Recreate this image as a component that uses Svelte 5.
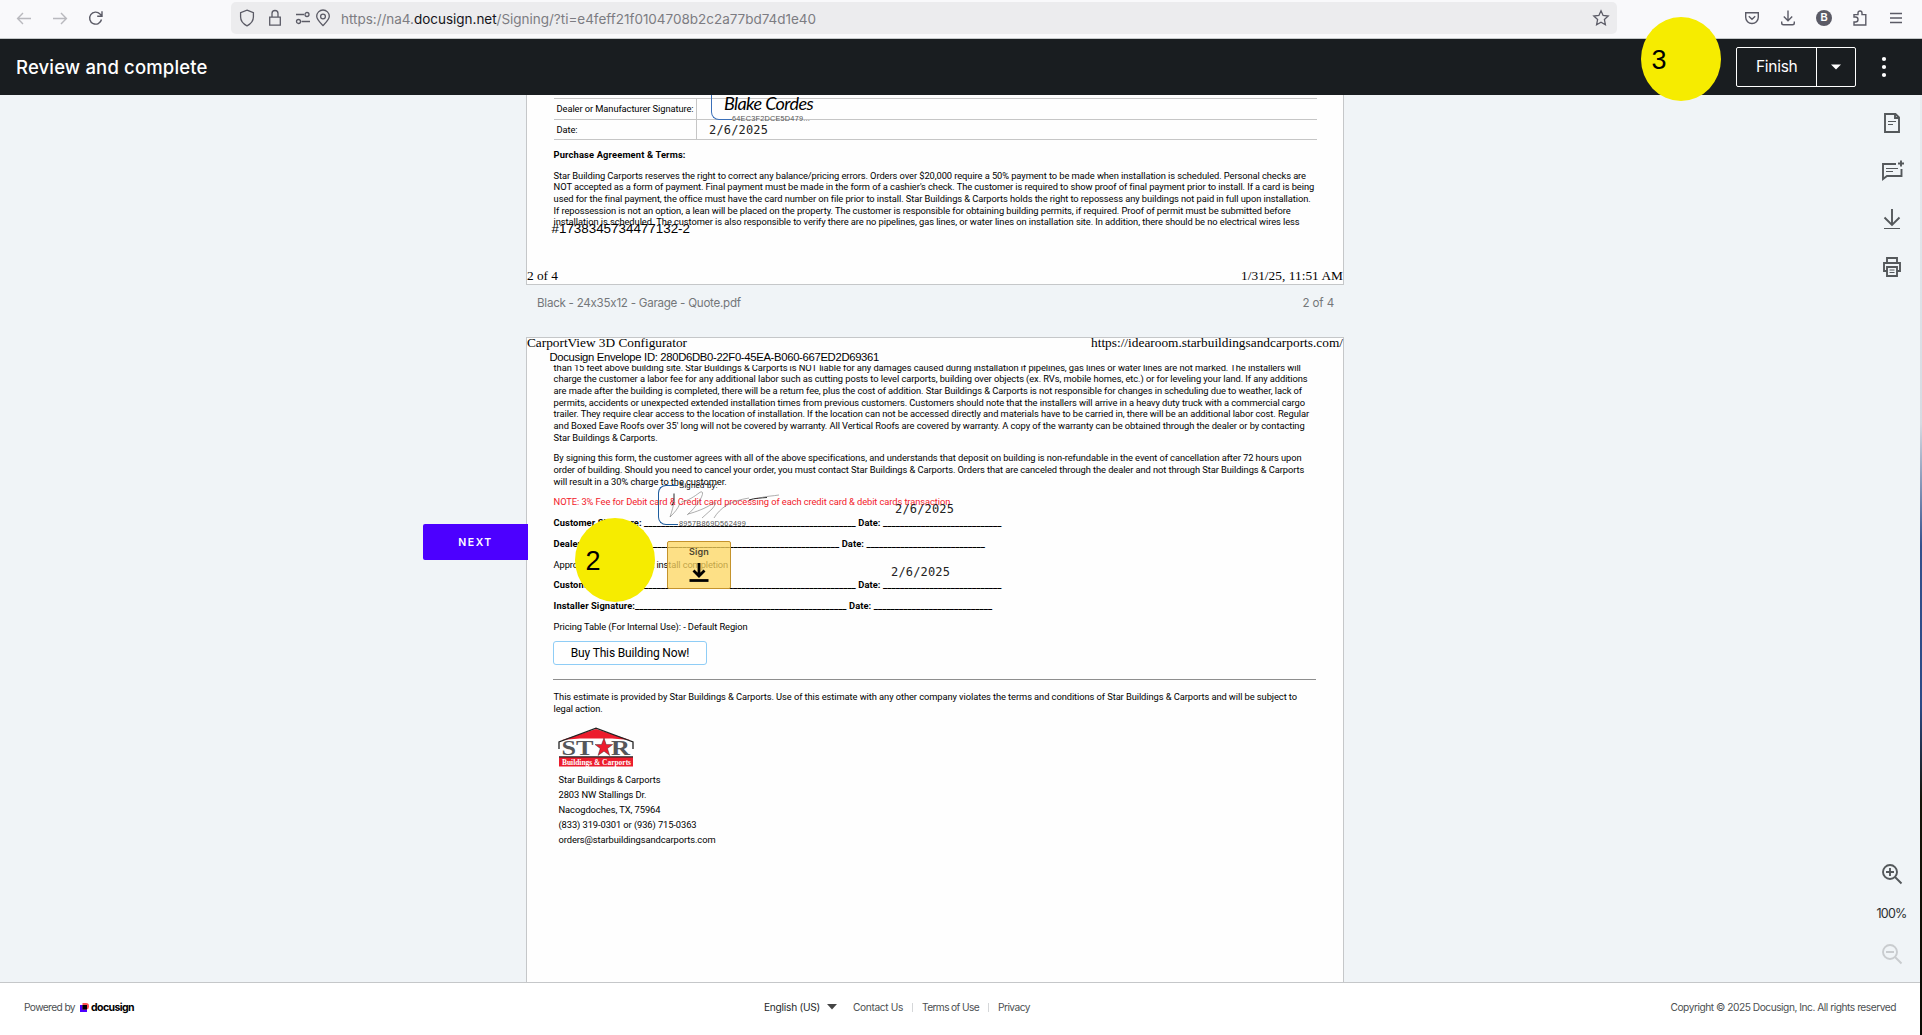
<script>
  function fit(node, width) {
    const natural = node.getBoundingClientRect().width;
    const count = [...node.textContent].length;
    node.style.letterSpacing = `${(width - natural) / count}px`;
  }

  const terms = [
    ['Star Building Carports reserves the right to correct any balance/pricing errors. Orders over $20,000 require a 50% payment to be made when installation is scheduled. Personal checks are', 752.4],
    ["NOT accepted as a form of payment. Final payment must be made in the form of a cashier's check. The customer is required to show proof of final payment prior to install. If a card is being", 760.2],
    ['used for the final payment, the office must have the card number on file prior to install. Star Buildings & Carports holds the right to repossess any buildings not paid in full upon installation.', 755.6],
    ['If repossession is not an option, a lean will be placed on the property. The customer is responsible for obtaining building permits, if required. Proof of permit must be submitted before', 737],
    ['installation is scheduled. The customer is also responsible to verify there are no pipelines, gas lines, or water lines on installation site. In addition, there should be no electrical wires less', 746]
  ];

  const liability = [
    ['than 15 feet above building site. Star Buildings & Carports is NOT liable for any damages caused during installation if pipelines, gas lines or water lines are not marked. The installers will', 747.2],
    ['charge the customer a labor fee for any additional labor such as cutting posts to level carports, building over objects (ex. RVs, mobile homes, etc.) or for leveling your land. If any additions', 754],
    ['are made after the building is completed, there will be a return fee, plus the cost of addition. Star Buildings & Carports is not responsible for changes in scheduling due to weather, lack of', 748.4],
    ['permits, accidents or unexpected extended installation times from previous customers. Customers should note that the installers will arrive in a heavy duty truck with a commercial cargo', 751.4],
    ['trailer. They require clear access to the location of installation. If the location can not be accessed directly and materials have to be carried in, there will be an additional labor cost. Regular', 755.4],
    ["and Boxed Eave Roofs over 35' long will not be covered by warranty. All Vertical Roofs are covered by warranty. A copy of the warranty can be obtained through the dealer or by contacting", 751],
    ['Star Buildings & Carports.', 104]
  ];

  const agreement = [
    ['By signing this form, the customer agrees with all of the above specifications, and understands that deposit on building is non-refundable in the event of cancellation after 72 hours upon', 747.6],
    ['order of building. Should you need to cancel your order, you must contact Star Buildings & Carports. Orders that are canceled through the dealer and not through Star Buildings & Carports', 750.6],
    ['will result in a 30% charge to the customer.', 173]
  ];

  const line = '_'.repeat(50);
  const short = '_'.repeat(28);
  const rows = [
    ['NOTE: 3% Fee for Debit card & Credit card processing of each credit card & debit cards transaction.', 399, 'note'],
    [`Customer Signature: ${line} Date: ${short}`, 448, 'bold'],
    [`Dealer Signature:${line} Date: ${short}`, 431.4, 'bold'],
    ['Approved by customer at install completion', 174.4, ''],
    [`Customer Signature: ${line} Date: ${short}`, 448, 'bold'],
    [`Installer Signature:${line} Date: ${short}`, 438.6, 'bold'],
    ['Pricing Table (For Internal Use): - Default Region', 194, '']
  ];

  const estimate = [
    ['This estimate is provided by Star Buildings & Carports. Use of this estimate with any other company violates the terms and conditions of Star Buildings & Carports and will be subject to', 743.4],
    ['legal action.', 49]
  ];

  const address = [
    ['Star Buildings & Carports', 102],
    ['2803 NW Stallings Dr.', 88],
    ['Nacogdoches, TX, 75964', 102],
    ['(833) 319-0301 or (936) 715-0363', 138],
    ['orders@starbuildingsandcarports.com', 157]
  ];
</script>

<div class="window">
  <div class="browser">
    <div class="nav">
      <svg width="16" height="16" viewBox="0 0 16 16" class="dim"><path d="M15 8.5H2M7 3 1.6 8.5 7 14" /></svg>
      <svg width="16" height="16" viewBox="0 0 16 16" class="dim"><path d="M1 8.5h13M9 3l5.4 5.5L9 14" /></svg>
      <svg width="16" height="16" viewBox="0 0 16 16"><path d="M13.5 9.5A6 6 0 1 1 12 4l1.8 1.8M14 1.2v5H9.2" /></svg>
    </div>
    <div class="urlbar">
      <svg class="shield" width="16" height="18" viewBox="0 0 16 18"><path d="M8 1.2 14.4 3.6V8c0 4-2.4 6.8-6.4 8.8C4 14.800 1.600 12 1.600 8V3.600z" /></svg>
      <svg class="lock" width="14" height="18" viewBox="0 0 14 18"><path d="M1.700 8.200h10.600v8H1.700zM4 8V4.500a3 3 0 0 1 6 0V8" /></svg>
      <svg class="perm" width="16" height="14" viewBox="0 0 16 14"><path d="M1 3.500h8M6.500 10.500H15" /><circle cx="12" cy="3.500" r="2" /><circle cx="3.500" cy="10.500" r="2" /></svg>
      <svg class="pin" width="16" height="18" viewBox="0 0 16 18"><path d="M8 16.500C4.500 13 1.700 10.500 1.700 7.300a6.300 6.300 0 0 1 12.600 0C14.300 10.500 11.500 13 8 16.500z" /><circle cx="8" cy="7.500" r="2.400" /></svg>
      <span class="url" use:fit={475}>https://na4.<b>docusign.net</b>/Signing/?ti=e4feff21f0104708b2c2a77bd74d1e40</span>
      <svg class="star" width="18" height="18" viewBox="0 0 18 18"><path d="m9 1.800 2.100 4.700 5.100.600-3.800 3.500 1 5.100L9 13.200l-4.400 2.500 1-5.100L1.800 7.100l5.100-.6z" /></svg>
    </div>
    <div class="tools">
      <svg width="16" height="16" viewBox="0 0 16 16"><path d="M1.700 2.700h12.600v4.500a6.300 6.300 0 0 1-12.600 0zM4.800 6.200 8 9.200l3.200-3" /></svg>
      <svg width="16" height="16" viewBox="0 0 16 16"><path d="M8 .500v10M3.800 6.600 8 10.700l4.200-4.100M1.700 11.500V13q0 1.800 1.800 1.800h9q1.800 0 1.800-1.800v-1.500" /></svg>
      <span class="account">B</span>
      <svg width="16" height="16" viewBox="0 0 16 16"><path d="M2 7V4.600h4V3a2 2 0 0 1 4 0v1.600h3.800V15H2v-3h1.500a2.300 2.300 0 0 0 0-5z" /></svg>
      <svg width="16" height="16" viewBox="0 0 16 16"><path d="M2 3.500h12M2 8h12M2 12.500h12" /></svg>
    </div>
  </div>

  <header>
    <h1 use:fit={191.5}>Review and complete</h1>
    <div class="actions">
      <div class="finish">
        <span class="label"><span use:fit={41.5}>Finish</span></span>
        <span class="drop"><svg width="10" height="6" viewBox="0 0 10 6"><path d="M0 .500h10L5 5.500z" /></svg></span>
      </div>
      <svg class="dots" width="6" height="22" viewBox="0 0 6 22"><circle cx="3" cy="3" r="2.100" /><circle cx="3" cy="11" r="2.100" /><circle cx="3" cy="19" r="2.100" /></svg>
    </div>
    <div class="step step-three">3</div>
  </header>

  <main>
    <div class="document">
      <section class="page first">
        <div class="table">
          <div class="row"><div class="key"><span use:fit={137}>Dealer or Manufacturer Signature:</span></div></div>
          <div class="row"><div class="key"><span use:fit={21}>Date:</span></div><span class="date" use:fit={59}>2/6/2025</span></div>
        </div>
        <div class="stamp">
          <span class="hand" use:fit={89}>Blake Cordes</span>
          <span class="hash" use:fit={78}>64EC3F2DCE5D479...</span>
        </div>
        <h2><span use:fit={132}>Purchase Agreement &amp; Terms:</span></h2>
        <div class="para">
          {#each terms as [text, width]}<p use:fit={width}>{text}</p>{/each}
        </div>
        <span class="order" use:fit={138.500}>#1738345734477132-2</span>
        <div class="times foot"><span use:fit={31}>2 of 4</span><span use:fit={102}>1/31/25, 11:51 AM</span></div>
      </section>

      <div class="caption"><span use:fit={206.500}>Black - 24x35x12 - Garage - Quote.pdf</span><span use:fit={31.5}>2 of 4</span></div>

      <section class="page second">
        <div class="times head"><span use:fit={160}>CarportView 3D Configurator</span><span use:fit={252}>https://idearoom.starbuildingsandcarports.com/</span></div>
        <div class="envelope"><span use:fit={329.500}>Docusign Envelope ID: 280D6DB0-22F0-45EA-B060-667ED2D69361</span></div>
        <div class="para liability">
          {#each liability as [text, width]}<p use:fit={width}>{text}</p>{/each}
        </div>
        <div class="para agreement">
          {#each agreement as [text, width]}<p use:fit={width}>{text}</p>{/each}
        </div>
        <div class="signing">
          {#each rows as [text, width, kind]}<p class={kind} use:fit={width}>{text}</p>{/each}
        </div>
        <div class="buy"><span use:fit={118.500}>Buy This Building Now!</span></div>
        <hr />
        <div class="para estimate">
          {#each estimate as [text, width]}<p use:fit={width}>{text}</p>{/each}
        </div>
        <svg class="logo" width="76" height="40" viewBox="0 0 76 40">
          <path d="M4 13 38 2l34 11-18-1.500H22z" fill="#ec1c2d" />
          <path d="M1 22v-7L38 1.200 75 15v7" fill="none" stroke="#222" stroke-width="1.300" />
          <text x="3.500" y="28" textLength="32" lengthAdjust="spacingAndGlyphs" class="word">ST</text>
          <text x="53" y="28" textLength="19" lengthAdjust="spacingAndGlyphs" class="word">R</text>
          <path d="m46 11 2.200 6.500h6.500l-5.200 4 2.200 7L46 24.200l-6 4.300 2.200-7-5.200-4h6.500z" fill="#ec1c2d" stroke="#222" stroke-width=".4" />
          <path d="M1 30h74v9.500H1z" fill="#ec1c2d" />
          <path d="M1 29.200h74v1.300H1z" fill="#222" />
          <text x="4" y="38" textLength="69" lengthAdjust="spacingAndGlyphs" class="sub">Buildings &amp; Carports</text>
        </svg>
        <div class="address">
          {#each address as [text, width]}<p use:fit={width}>{text}</p>{/each}
        </div>

        <div class="signature">
          <span class="by" use:fit={39}>Signed by:</span>
          <svg width="122" height="34" viewBox="0 0 122 34"><path class="ink" d="M15 2.500v8l-2 4M90 9c6-2 12-2 18-2.500" /><path d="M15 10c-.5 5-2 10-4 16 4-4 8-8 10-14M22 11c7-1 14-6 18-9 4-3 5 0 1 7-4 6-9 12-13 15M29 23c8-2 18-6 24-10 4-3 5-1 0 5l-10 9M55 27c6-10 16-17 35-20M100 7c8-2 14-2 20-3" /></svg>
          <span class="hash" use:fit={67}>8957B869D562499</span>
        </div>
        <span class="date over upper" use:fit={59}>2/6/2025</span>
        <span class="date over lower" use:fit={59}>2/6/2025</span>
        <div class="tag">
          <span use:fit={20}>Sign</span>
          <svg width="20" height="20" viewBox="0 0 20 20"><path d="M10 0v13M4.500 7.500l5.500 5.500 5.500-5.500" /><path d="M.500 17.500h19" /></svg>
        </div>
        <div class="next"><span use:fit={34.500}>NEXT</span></div>
        <div class="step step-two">2</div>
      </section>
    </div>

    <aside>
      <div class="group">
        <svg width="24" height="24" viewBox="0 0 24 24"><path d="M5 3h10.500L19 6.500V21H5zM15 3v4h4" /><path class="thin" d="M8 10.500h8M8 13.500h5" /></svg>
        <svg width="24" height="24" viewBox="0 0 24 24"><path d="M16 5H3v15l4-3h14.500v-7M18 4.500h6M21 1.500v6" /><path class="thin" d="M6 9.500h12M6 12.500h7" /></svg>
        <svg width="24" height="24" viewBox="0 0 24 24"><path d="M12 2v16M4.500 10.500 12 18l7.500-7.500" /><path class="thin" d="M4 21.500h16" /></svg>
        <svg width="24" height="24" viewBox="0 0 24 24"><path d="M7 7.500V3h10v4.500M6.500 16H4V8h16v8h-2.500M7 12h10v9H7z" /><path class="thin" d="M9.500 15h5M9.500 17.500h5" /></svg>
      </div>
      <div class="group zoom">
        <svg width="24" height="24" viewBox="0 0 24 24"><circle cx="10" cy="10" r="7" /><path d="m15 15 6.500 6.500M10 6v8M6 10h8" /></svg>
        <span use:fit={30}>100%</span>
        <svg class="off" width="24" height="24" viewBox="0 0 24 24"><circle cx="10" cy="10" r="7" /><path d="m15 15 6.500 6.500M6 10h8" /></svg>
      </div>
    </aside>
  </main>

  <footer>
    <div class="powered">
      <span use:fit={51}>Powered by</span>
      <svg width="9" height="9" viewBox="0 0 9 9"><path d="M0 2h7v7H0z" fill="#4c00ff" /><path d="M2.500 0H6a3 3 0 0 1 3 3v.500a3 3 0 0 1-2.500 3h-4z" fill="#ff5252" /><path d="M2.500 2H7v4.500H2.500z" fill="#000" /></svg>
      <b use:fit={43}>docusign</b>
    </div>
    <div class="links">
      <span class="lang" use:fit={56}>English (US)</span>
      <svg width="10" height="6" viewBox="0 0 10 6"><path d="M0 0h10L5 5.500z" fill="#444" /></svg>
      <span class="contact" use:fit={50}>Contact Us</span><i></i>
      <span use:fit={57}>Terms of Use</span><i></i>
      <span use:fit={32}>Privacy</span>
    </div>
    <span use:fit={225.500}>Copyright © 2025 Docusign, Inc. All rights reserved</span>
  </footer>
  <div class="edge"></div>
</div>

<style>
  :global(body) { margin: 0; overflow: hidden; }
  .window { position: relative; display: flex; flex-direction: column; width: 1922px; height: 1035px; overflow: hidden; background: #f0f4f7; font-family: Inter, "Open Sans", sans-serif; }
  p, h1, h2 { margin: 0; white-space: nowrap; }
  span, p, h1 { flex: none; width: max-content; white-space: nowrap; }
  svg { flex: none; display: block; fill: none; stroke: #5b5b66; }

  .browser { display: flex; align-items: flex-start; box-sizing: border-box; height: 39px; background: #f9f9fb; border-bottom: 1px solid #c4c8c9; }
  .nav { display: flex; gap: 20px; width: 215px; padding: 10px 0 0 16px; }
  .nav svg { stroke-width: 1.400; }
  .dim { stroke: #b9b9be; }
  .urlbar { display: flex; align-items: center; box-sizing: border-box; width: 1386px; height: 32px; margin-top: 2px; padding: 0 7px 0 8px; border-radius: 5px; background: #ececee; }
  .urlbar svg { stroke-width: 1.300; }
  .lock { margin-left: 13px; }
  .perm { margin-left: 13px; }
  .pin { margin-left: 4px; }
  .url { margin: 2px 0 0 10px; font: 13.500px/32px Inter, sans-serif; color: #7c7c82; }
  .url b { font-weight: 400; color: #15141a; }
  .star { margin-left: auto; }
  .tools { display: flex; gap: 20px; padding: 10px 0 0 127px; }
  .tools svg { stroke-width: 1.400; }
  .account { width: 16px; height: 16px; border-radius: 50%; background: #5b5b66; color: #fff; font: bold 10px/16px "Liberation Sans", sans-serif; text-align: center; }

  header { position: relative; z-index: 3; display: flex; align-items: center; justify-content: space-between; box-sizing: border-box; height: 56px; padding: 0 35px 0 16px; background: #191d20; color: #fff; }
  h1 { margin-top: -1px; font-size: 18.500px; font-weight: 500; line-height: 54px; }
  .actions { display: flex; align-items: center; gap: 25px; }
  .finish { display: flex; box-sizing: border-box; width: 120px; height: 40px; border: 1px solid #fff; border-radius: 2px; }
  .label { width: 80px; padding-left: 19px; box-sizing: border-box; border-right: 1px solid #fff; font-size: 15.500px; line-height: 38px; }
  .label span { display: block; }
  .drop { display: grid; place-items: center; flex: 1; }
  .drop svg, .dots { fill: #fff; stroke: none; }
  .step { position: absolute; z-index: 4; box-sizing: border-box; width: 80px; height: 84px; padding-left: 10.500px; border-radius: 50%; background: #f6ec00; color: #000; font: 27px/87px "Liberation Sans", Arial, sans-serif; }
  .step-three { left: 1641px; top: -22px; }

  main { position: relative; display: flex; justify-content: space-between; height: 887px; overflow: hidden; }
  .document { width: 818px; margin-left: 526px; font: 9.333px/11.667px Roboto, sans-serif; color: #000; }
  .page { position: relative; box-sizing: border-box; background: #fefefe; border: 1px solid #c5c7c9; }
  .first { display: flex; flex-direction: column; height: 190px; padding-top: 3px; border-top: 0; }
  .table { width: 763px; margin-left: 27px; border-bottom: 1px solid #c6c6c6; }
  .row { display: flex; box-sizing: border-box; height: 21px; border-top: 1px solid #c6c6c6; line-height: 19px; }
  .row:last-child { height: 20px; }
  .key { box-sizing: border-box; width: 143px; padding-left: 2.500px; border-right: 1px solid #c6c6c6; }
  .key span { display: block; }
  .date { font: 12px/20px "DejaVu Sans Mono", monospace; color: #222; }
  .row .date { margin-left: 12px; line-height: 20px; }
  .stamp { position: absolute; left: 184px; top: 0; width: 20px; height: 24px; border: solid #3a6fb8; border-width: 0 0 1.500px 1.500px; border-radius: 0 0 0 8px; }
  .hand { position: absolute; left: 12px; top: 0; font: italic 400 18px/16px Lato, cursive; color: #000; }
  .hash { position: absolute; left: 20px; top: 19px; font: 7.300px/10px "Liberation Sans", Arial, sans-serif; color: #555; }
  h2 { margin: 9px 0 9px 26.600px; font-size: inherit; font-weight: 700; }
  h2 span { display: block; }
  .para { padding-left: 26.600px; }
  .order { position: absolute; left: 24.500px; bottom: 48.500px; font: 13.400px/15px "Liberation Sans", Arial, sans-serif; }
  .times { display: flex; justify-content: space-between; font: 13.333px/15px "Liberation Serif", "Times New Roman", serif; }
  .foot { margin: auto 0 1px; }
  .caption { display: flex; justify-content: space-between; height: 52px; padding: 0 10px 0 11px; font: 11.600px/36px Inter, sans-serif; color: #74777a; }

  .second { height: 700px; }
  .head { height: 12px; line-height: 10px; }
  .envelope { position: relative; z-index: 1; margin: 0 20px 0 22.500px; background: #fefefe; font: 11.300px/15px "Liberation Sans", Arial, sans-serif; }
  .envelope span { display: block; }
  .liability { margin-top: -3.400px; }
  .agreement { margin-top: 8.900px; }
  .signing { margin-top: 4.900px; padding-left: 26.600px; line-height: 20.833px; }
  .note { color: #f2202a; }
  .bold { font-weight: 700; }
  .buy { display: flex; justify-content: center; box-sizing: border-box; width: 154px; height: 24px; margin: 3px 0 0 26px; border: 1px solid #8fcdf6; border-radius: 3px; background: #fff; font-size: 12px; line-height: 23px; }
  hr { height: 1px; width: 763px; margin: 14px 0 0 26px; border: 0; background: #8e8e8e; }
  .estimate { margin-top: 11px; }
  .logo { margin: 13px 0 0 31px; stroke: none; }
  .word { font: bold 22px "Liberation Serif", serif; fill: #55565a; }
  .sub { font: bold 8px "Liberation Serif", serif; fill: #fff; }
  .address { margin: 5px 0 0 31.500px; line-height: 15px; }

  .signature { position: absolute; left: 131px; top: 147px; box-sizing: border-box; width: 20px; height: 40px; border: solid #1d5c9e; border-width: 1.500px 0 1.500px 1.500px; border-radius: 8px 0 0 8px; }
  .signature svg { position: absolute; left: 0; top: 5px; stroke: #777; stroke-width: .600; }
  .signature .ink { stroke: #111; stroke-width: .900; }
  .by { position: absolute; left: 20px; top: -5px; font: 7.800px/10px "Liberation Sans", Arial, sans-serif; }
  .signature .hash { top: 33px; }
  .over { position: absolute; }
  .upper { left: 368px; top: 161px; }
  .lower { left: 364px; top: 224px; }
  .tag { position: absolute; left: 140px; top: 203px; display: flex; flex-direction: column; align-items: center; gap: 4px; box-sizing: border-box; width: 64px; height: 48px; padding-top: 3px; border: 1px solid #c4932c; border-radius: 2px; background: #fcd65ec0; color: #4f4630; font: 600 9px/14px Inter, sans-serif; }
  .tag svg { stroke: #000; stroke-width: 2.800; }
  .next { position: absolute; left: -104px; top: 186px; display: flex; justify-content: center; width: 105px; height: 36px; border-radius: 2px 0 0 2px; background: #4c00ff; color: #fff; font: 600 10.500px/37px Inter, sans-serif; }
  .step-two { left: 48px; top: 179.500px; }

  aside { display: flex; flex-direction: column; justify-content: space-between; box-sizing: border-box; width: 42px; padding: 16px 0; }
  .group { display: flex; flex-direction: column; gap: 24px; }
  .group svg { stroke: #54585b; stroke-width: 1.900; }
  .group .thin { stroke-width: 1; }
  .zoom { gap: 16px; }
  .zoom span { margin-left: -3.500px; font-size: 12.500px; line-height: 24px; color: #2b2e30; }
  .group .off { stroke: #c9cccf; }

  footer { position: relative; z-index: 2; display: flex; align-items: center; justify-content: space-between; box-sizing: border-box; height: 53px; padding: 0 26px 4px 24px; border-top: 1px solid #c5c7c9; background: #fff; font-size: 10.200px; color: #4c4f52; }
  footer svg { stroke: none; }
  .powered, .links { display: flex; align-items: center; }
  .powered svg { margin: 0 2px 0 5px; }
  .powered b { color: #000; font-weight: 700; font-size: 10.500px; }
  .links { position: absolute; left: 764px; }
  .lang { color: #26292b; }
  .links svg { margin-left: 7px; }
  .contact { margin-left: 16px; }
  .links i { width: 1px; height: 9px; margin: 0 9px; background: #d5d7d9; }
  .edge { position: absolute; z-index: 2; right: 0; top: 95px; width: 2px; height: 940px; background: linear-gradient(#e8ecf0, #d5dbe2 35%, #33508c 48%, #2b4a86 65%, #141408 75%, #0a0a04); }
</style>
